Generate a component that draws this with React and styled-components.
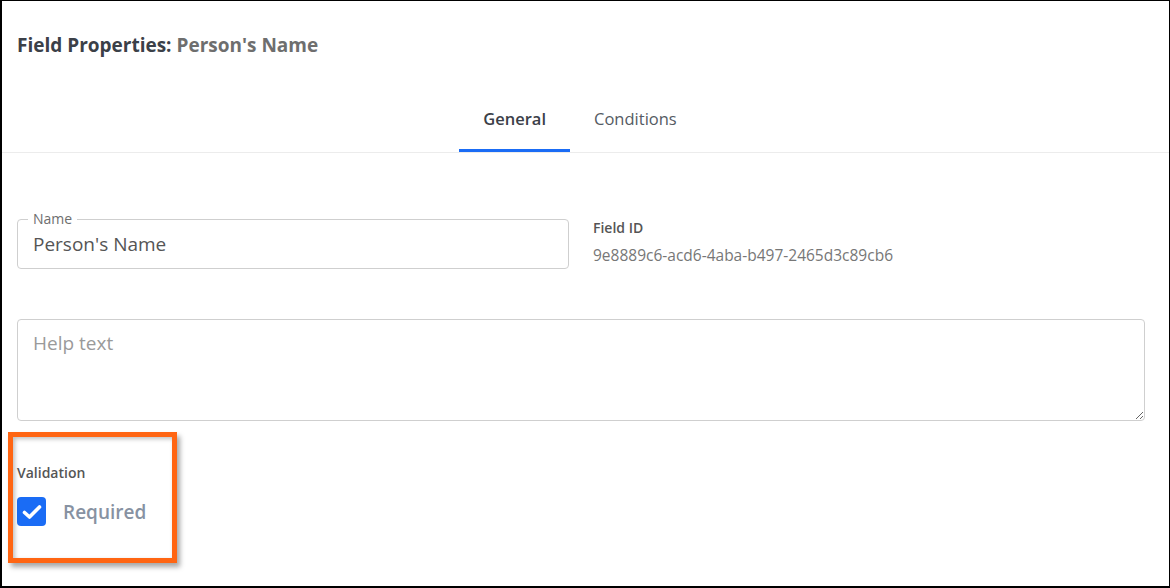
import React, { useState } from 'react'
import styled, { createGlobalStyle } from 'styled-components'

const GlobalStyle = createGlobalStyle`
    html, body {
        margin: 0;
        padding: 0;
        background: #ffffff;
    }
    body {
        font-family: "Open Sans", "Liberation Sans", sans-serif;
    }
    * {
        box-sizing: border-box;
    }
`

const Frame = styled.div`
    width: 1170px;
    height: 588px;
    border: 1px solid #000000;
    border-left-width: 2px;
    border-bottom-width: 2px;
    background: #ffffff;
    overflow: hidden;
`

const Header = styled.div`
    padding: 33px 15px 0;
    height: 87px;
`

const Title = styled.h1`
    margin: 0;
    font-size: 19px;
    line-height: 22px;
    font-weight: 700;
    color: #3b4048;
    > span {
        color: #6e6e6e;
    }
`

const TabBar = styled.div`
    display: flex;
    justify-content: center;
    padding-right: 11px;
    border-bottom: 1px solid #ececec;
    height: 65px;
`

const Tab = styled.button`
    appearance: none;
    background: none;
    border: 0;
    border-bottom: 3px solid ${p => (p.$active ? '#1a6cf5' : 'transparent')};
    padding: 20px 24px 0;
    height: 64px;
    font-family: inherit;
    font-size: 16.5px;
    line-height: 22px;
    font-weight: ${p => (p.$active ? 600 : 400)};
    color: ${p => (p.$active ? '#3b4048' : '#555b63')};
    display: flex;
    align-items: flex-start;
    cursor: pointer;
`

const Body = styled.div`
    padding: 66px 24px 0 15px;
`

const Row = styled.div`
    display: flex;
    gap: 24px;
    align-items: flex-start;
`

const Outlined = styled.fieldset`
    margin: 0;
    width: 552px;
    height: 58px;
    margin-top: -8px;
    border: 1px solid #cfcfcf;
    border-radius: 4px;
    padding: 0 15px 0 10px;
    > legend {
        font-size: 14px;
        line-height: 16px;
        color: #6e6e6e;
        padding: 0 5px;
        margin-left: 0;
    }
`

const NameInput = styled.input`
    border: 0;
    outline: none;
    width: 100%;
    padding: 0 0 0 5px;
    margin-top: 5px;
    font-family: inherit;
    font-size: 19px;
    line-height: 24px;
    color: #555555;
    background: transparent;
`

const Meta = styled.div`
    display: flex;
    flex-direction: column;
`

const MetaLabel = styled.div`
    font-size: 14px;
    line-height: 18px;
    font-weight: 600;
    color: #555555;
`

const MetaValue = styled.div`
    margin-top: 8px;
    font-size: 15.5px;
    line-height: 20px;
    color: #777777;
`

const HelpArea = styled.textarea`
    display: block;
    margin-top: 50px;
    width: 1128px;
    height: 102px;
    border: 1px solid #cfcfcf;
    border-radius: 4px;
    padding: 11px 15px;
    font-family: inherit;
    font-size: 19px;
    line-height: 24px;
    color: #555555;
    resize: both;
    outline: none;
    &::placeholder {
        color: #9a9a9a;
    }
`

const Validation = styled.section`
    position: relative;
    margin-top: 43px;
`

const Highlight = styled.div`
    position: absolute;
    left: -9px;
    top: -32px;
    width: 169px;
    height: 131px;
    border: 5px solid #ff6512;
    box-shadow: 3px 4px 5px rgba(0, 0, 0, 0.35), inset 2px 2px 4px rgba(0, 0, 0, 0.25);
    pointer-events: none;
`

const SectionLabel = styled.div`
    font-size: 14px;
    line-height: 18px;
    font-weight: 600;
    color: #555555;
`

const CheckRow = styled.label`
    display: flex;
    align-items: center;
    gap: 17px;
    margin-top: 15px;
    cursor: pointer;
`

const Box = styled.span`
    width: 29px;
    height: 29px;
    border-radius: 4px;
    background: ${p => (p.$checked ? '#1a6cf5' : '#ffffff')};
    border: ${p => (p.$checked ? '0' : '2px solid #8792a2')};
    display: flex;
    align-items: center;
    justify-content: center;
`

const CheckText = styled.span`
    font-size: 19px;
    line-height: 28px;
    font-weight: 600;
    color: #8792a2;
`

function App() {
    const [tab, setTab] = useState('general')
    const [required, setRequired] = useState(true)

    return (
        <>
            <GlobalStyle />
            <Frame>
                <Header>
                    <Title>
                        Field Properties: <span>Person's Name</span>
                    </Title>
                </Header>
                <TabBar>
                    <Tab $active={tab === 'general'} onClick={() => setTab('general')}>General</Tab>
                    <Tab $active={tab === 'conditions'} onClick={() => setTab('conditions')}>Conditions</Tab>
                </TabBar>
                <Body>
                    <Row>
                        <Outlined>
                            <legend>Name</legend>
                            <NameInput defaultValue="Person's Name" />
                        </Outlined>
                        <Meta>
                            <MetaLabel>Field ID</MetaLabel>
                            <MetaValue>9e8889c6-acd6-4aba-b497-2465d3c89cb6</MetaValue>
                        </Meta>
                    </Row>
                    <HelpArea placeholder="Help text" />
                    <Validation>
                        <Highlight />
                        <SectionLabel>Validation</SectionLabel>
                        <CheckRow onClick={() => setRequired(!required)}>
                            <Box $checked={required}>
                                {required && (
                                    <svg width="20" height="16" viewBox="0 0 20 16">
                                        <path d="M2.5 8.5 L7.5 13 L17.5 3" fill="none" stroke="#ffffff" strokeWidth="3.6" strokeLinecap="round" strokeLinejoin="round" />
                                    </svg>
                                )}
                            </Box>
                            <CheckText>Required</CheckText>
                        </CheckRow>
                    </Validation>
                </Body>
            </Frame>
        </>
    )
}

export default App
